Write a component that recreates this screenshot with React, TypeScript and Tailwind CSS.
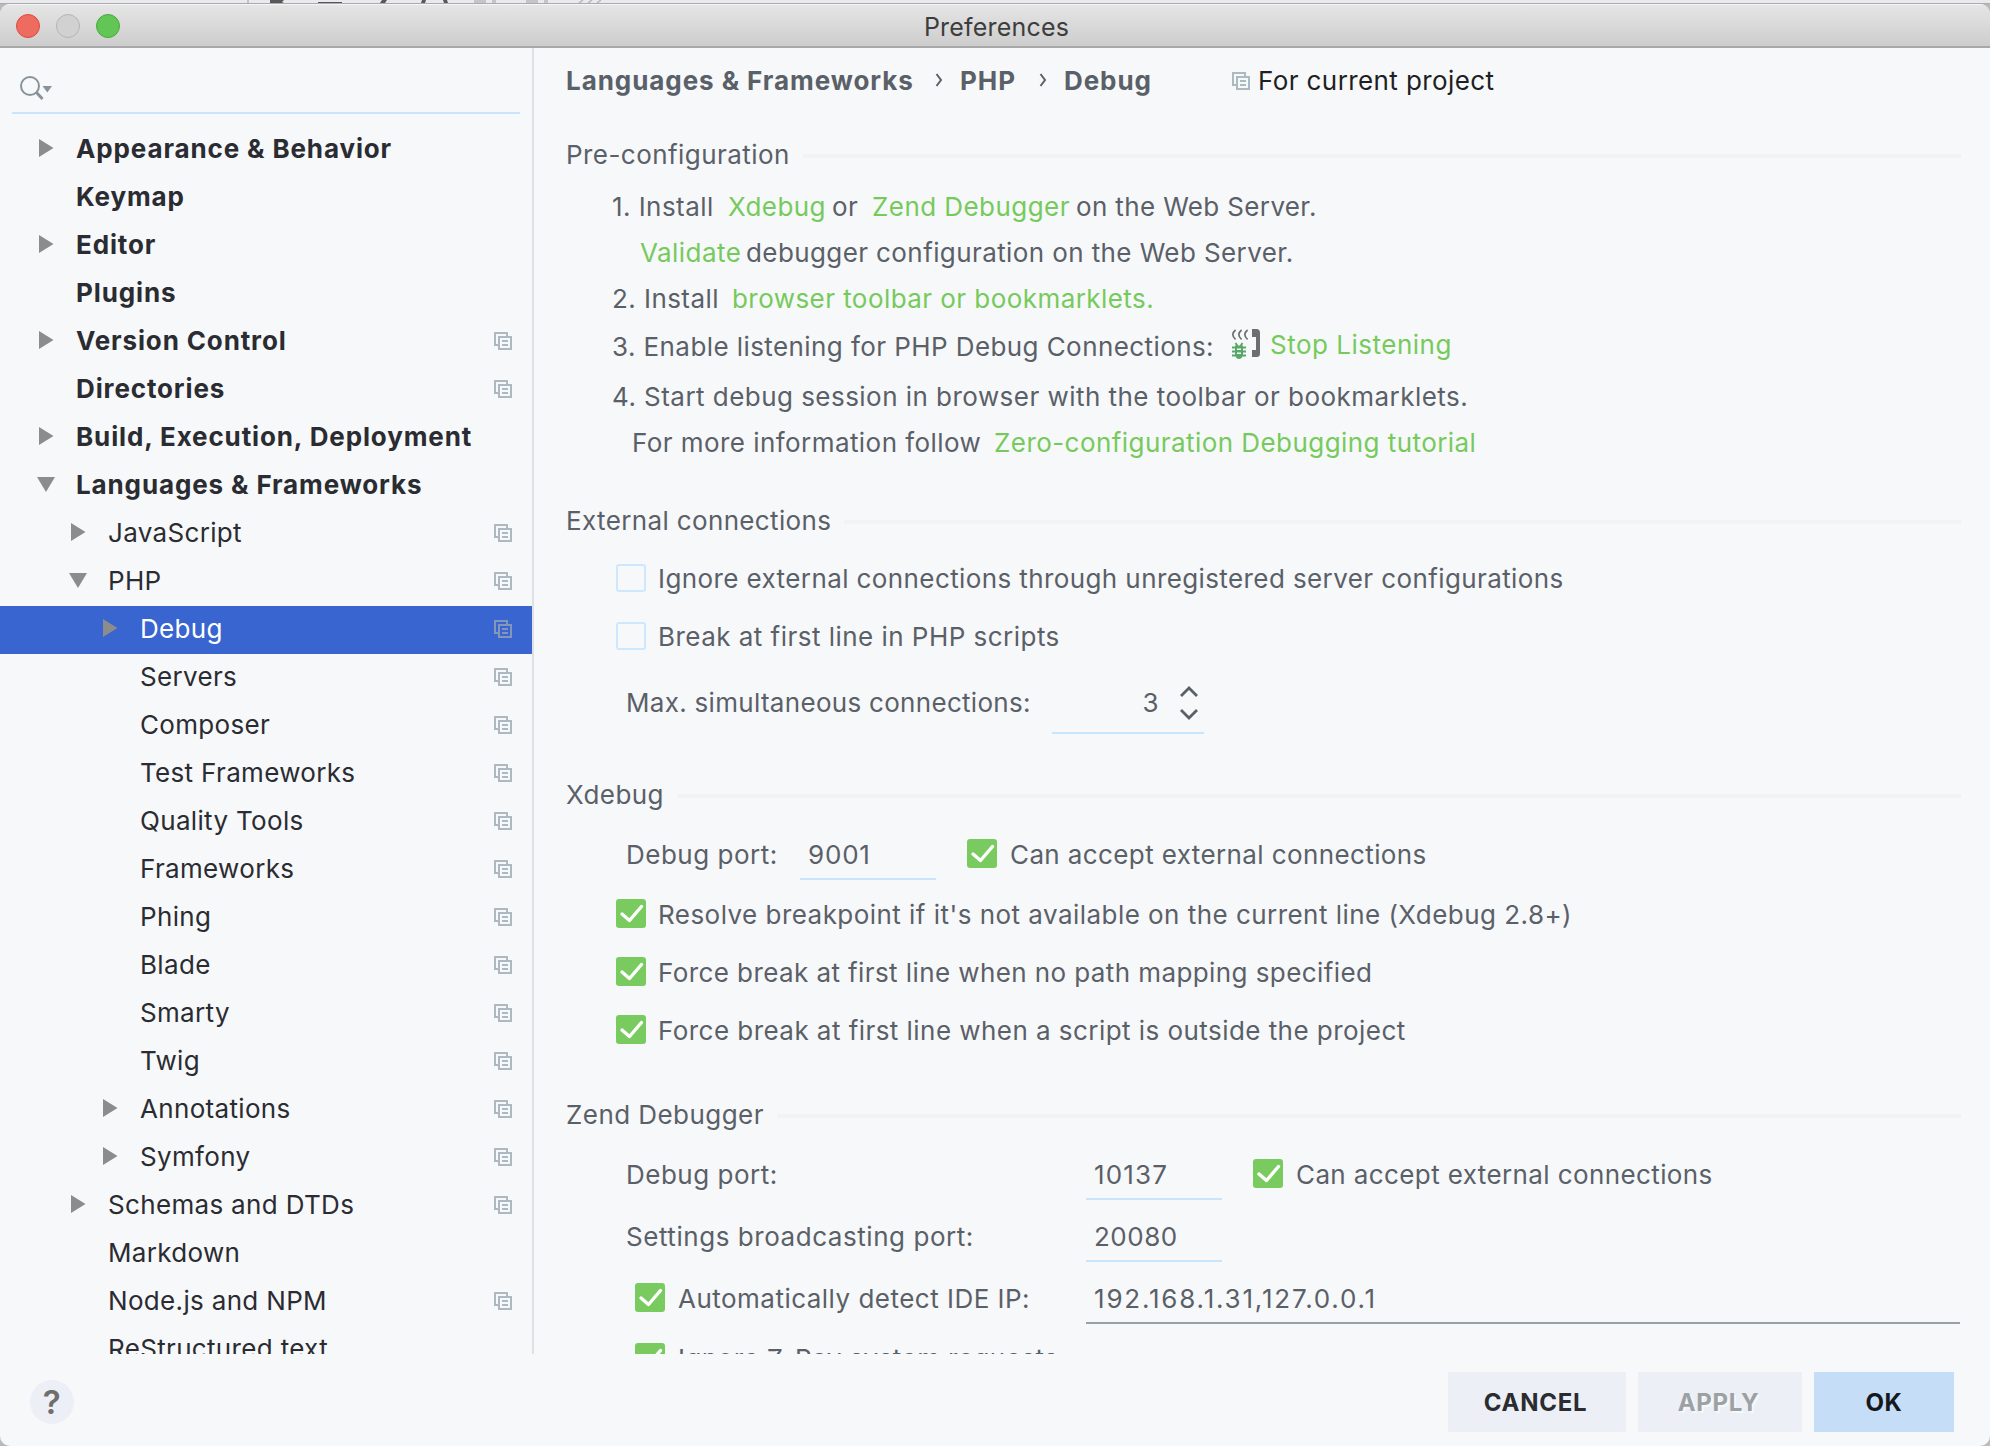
import type { ReactNode } from "react";

type Item = {
  label: string;
  level: 0 | 1 | 2;
  arrow?: "right" | "down";
  project?: boolean;
  selected?: boolean;
};

const ITEMS: Item[] = [
  { label: "Appearance & Behavior", level: 0, arrow: "right" },
  { label: "Keymap", level: 0 },
  { label: "Editor", level: 0, arrow: "right" },
  { label: "Plugins", level: 0 },
  { label: "Version Control", level: 0, arrow: "right", project: true },
  { label: "Directories", level: 0, project: true },
  { label: "Build, Execution, Deployment", level: 0, arrow: "right" },
  { label: "Languages & Frameworks", level: 0, arrow: "down" },
  { label: "JavaScript", level: 1, arrow: "right", project: true },
  { label: "PHP", level: 1, arrow: "down", project: true },
  { label: "Debug", level: 2, arrow: "right", project: true, selected: true },
  { label: "Servers", level: 2, project: true },
  { label: "Composer", level: 2, project: true },
  { label: "Test Frameworks", level: 2, project: true },
  { label: "Quality Tools", level: 2, project: true },
  { label: "Frameworks", level: 2, project: true },
  { label: "Phing", level: 2, project: true },
  { label: "Blade", level: 2, project: true },
  { label: "Smarty", level: 2, project: true },
  { label: "Twig", level: 2, project: true },
  { label: "Annotations", level: 2, arrow: "right", project: true },
  { label: "Symfony", level: 2, arrow: "right", project: true },
  { label: "Schemas and DTDs", level: 1, arrow: "right", project: true },
  { label: "Markdown", level: 1 },
  { label: "Node.js and NPM", level: 1, project: true },
  { label: "ReStructured text", level: 1 },
];

const INDENT = ["pl-[36px]", "pl-[68px]", "pl-[100px]"];

function ProjectIcon({ className = "" }: { className?: string }) {
  return (
    <svg width="18" height="18" viewBox="0 0 18 18" fill="none" stroke="currentColor" strokeWidth="2" className={`shrink-0 ${className}`}>
      <path d="M4 13H1V1H13V4" />
      <rect x="5" y="5" width="12" height="12" />
      <path d="M8 9H14M8 13H14" />
    </svg>
  );
}

function TreeArrow({ dir }: { dir?: "right" | "down" }) {
  return (
    <svg width="20" height="20" viewBox="0 0 20 20" className="mb-1 shrink-0" fill="#8c8c8c">
      {dir === "right" && <path d="M3 1L17.5 10L3 19Z" />}
      {dir === "down" && <path d="M1 3H19L10 18Z" />}
    </svg>
  );
}

function TreeRow({ item }: { item: Item }) {
  const text = item.selected ? "text-white" : "text-[#2a2c32]";
  const weight = item.level === 0 ? "font-bold tracking-[0.87px]" : "tracking-[0.33px]";
  return (
    <div className={`flex h-12 shrink-0 items-center pr-[20px] ${INDENT[item.level]} ${item.selected ? "bg-[#3965d0]" : ""}`}>
      <TreeArrow dir={item.arrow} />
      <span className={`ml-[20px] flex-1 pb-0.5 ${weight} ${text}`}>{item.label}</span>
      {item.project && <ProjectIcon className={`mb-0.5 ${item.selected ? "text-[#8497ba]" : "text-[#adb9c1]"}`} />}
    </div>
  );
}

function Checkbox({ checked }: { checked?: boolean }) {
  if (!checked) {
    return <span className="mb-0.5 h-7 w-[30px] shrink-0 rounded-[3px] border-2 border-[#cfe7fd]" />;
  }
  return (
    <span className="mb-[3px] flex h-[29px] w-[30px] shrink-0 rounded-[3px] bg-[#79cb60]">
      <svg width="30" height="29" viewBox="0 0 30 29" fill="none" stroke="#fff" strokeWidth="3.4" strokeLinecap="round" strokeLinejoin="round">
        <path d="M6 15L13.5 21.5L25.5 7.5" />
      </svg>
    </span>
  );
}

function Heading({ children, className }: { children: ReactNode; className: string }) {
  return (
    <div className={`flex shrink-0 items-center pl-[32px] pr-[29px] ${className}`}>
      <span className="shrink-0">{children}</span>
      <span className="ml-[13px] mt-0.5 h-1 flex-1 bg-[#f2f3f4]" />
    </div>
  );
}

function Row({ children, className }: { children: ReactNode; className: string }) {
  return <div className={`flex shrink-0 items-center ${className}`}>{children}</div>;
}

function Crumb() {
  return (
    <svg width="8" height="16" viewBox="0 0 8 16" fill="none" stroke="#5a6068" strokeWidth="2" className="mb-0.5 shrink-0">
      <path d="M1.5 2L6 8L1.5 14" />
    </svg>
  );
}

function ListenIcon() {
  return (
    <svg width="29" height="31" viewBox="0 0 29 31" fill="none" className="mb-1.5 shrink-0">
      <g stroke="#6e6e6e" strokeWidth="1.7">
        <path d="M4.6 1Q-1 5.5 4.6 10.4M10.6 1Q5 5.5 10.6 10.4M16.6 1Q11 5.5 16.6 10.4" />
      </g>
      <path fill="#6e6e6e" d="M21 0H25.5Q29 0 29 4V24.5Q29 28 25.5 28H21V21H25V8H21Z" />
      <g stroke="#59a869" strokeWidth="2">
        <path d="M4.5 14L6.5 17M11.5 14L9.500 17M1 18.500H15M1 22.500H15M1 26.500H15" />
      </g>
      <path fill="#59a869" d="M4 16.500H12V25.500Q11 30 8 30Q5 30 4 25.500Z" />
      <path fill="#f7f8fa" d="M6 19.500H10V21H6ZM6 23.500H10V25H6Z" />
    </svg>
  );
}

function Field({ children, className }: { children: ReactNode; className: string }) {
  return <span className={`flex items-center border-b-2 border-[#c9e4fc] pt-0.5 pl-2 ${className}`}>{children}</span>;
}

const LINK = "text-[#76ca5c]";

export default function App() {
  return (
    <div className="flex h-[1446px] w-[1990px] flex-col overflow-hidden bg-[#b9babc] font-['Inter',sans-serif] text-[26px] leading-8 whitespace-nowrap">
      <div className="relative h-1 shrink-0 border-b border-[#a9abad] bg-[#e9eaed]">
        <svg width="640" height="3" viewBox="0 0 640 3" className="absolute top-0 left-0">
          <path fill="#c4c5c8" d="M247 0H249V3H247ZM474 0H486V3H474ZM492 0H496V3H492ZM526 0H538V3H526ZM544 0H548V3H544Z" />
          <path fill="#58585a" d="M270 0H284L282 2L284 3H270ZM318 2H342V3H318ZM382 0H387L385 3H380ZM422 0H426L425 3H421ZM443 0H447L448 3H444Z" />
          <path stroke="#b5b6b9" strokeWidth="1.500" d="M579 3L583 0M588 3L592 0M597 3L601 0" />
        </svg>
      </div>

      <div className="flex min-h-0 flex-1 flex-col overflow-hidden rounded-[10px] bg-[#f7f8fa]">
        <header className="flex h-11 shrink-0 items-center border-t border-b-2 border-t-[#f5f5f5] border-b-[#a8a8a8] bg-linear-to-b from-[#e5e5e5] to-[#cdcdcd] pl-4">
          <div className="flex w-[200px] gap-4">
            <span className="size-6 rounded-full border border-[#e0483e] bg-[#ed6b5f]" />
            <span className="size-6 rounded-full border border-[#b4b4b4] bg-[#d1d1d1]" />
            <span className="size-6 rounded-full border border-[#4aa73c] bg-[#61c655]" />
          </div>
          <span className="mr-[213px] flex-1 pt-0.5 text-center text-[25px] tracking-[0.2px] text-[#3d3d3d]">Preferences</span>
        </header>

        <div className="flex h-[1306px] shrink-0 overflow-hidden">
          <aside className="flex w-[534px] shrink-0 flex-col overflow-hidden border-r-2 border-[#dfe1e4]">
            <div className="mx-3 mb-3 flex h-[66px] shrink-0 items-start border-b-2 border-[#c9e4fc] pt-7 pl-2">
              <svg width="34" height="26" viewBox="0 0 34 26" fill="none">
                <circle cx="10" cy="10" r="9" stroke="#87939a" strokeWidth="2" />
                <path d="M16 16L22.500 23" stroke="#87939a" strokeWidth="3" />
                <path d="M22.500 10H32L27.300 16.500Z" fill="#87939a" />
              </svg>
            </div>
            {ITEMS.map((item) => (
              <TreeRow key={item.label} item={item} />
            ))}
          </aside>

          <main className="flex min-w-0 flex-1 flex-col overflow-hidden tracking-[0.44px] text-[#5a6068]">
            <Row className="h-[66px] pl-[32px] font-bold tracking-[0.93px]">
              <span className="w-[369px]">Languages &amp; Frameworks</span>
              <Crumb />
              <span className="ml-[17px] w-[79px]">PHP</span>
              <Crumb />
              <span className="ml-[17px] w-[168px]">Debug</span>
              <ProjectIcon className="text-[#adb9c1]" />
              <span className="ml-[8px] font-normal tracking-[0.4px] text-[#1d1f23]">For current project</span>
            </Row>

            <Heading className="h-[70px] pt-3">Pre-configuration</Heading>
            <Row className="h-[46px] pl-[78px]">
              <span className="w-[116px]">1. Install</span>
              <span className={`w-[104px] ${LINK}`}>Xdebug</span>
              <span className="w-[40px]">or</span>
              <span className={`w-[204px] ${LINK}`}>Zend Debugger</span>
              <span className="tracking-[0.36px]">on the Web Server.</span>
            </Row>
            <Row className="h-[46px] pl-[106px]">
              <span className={`w-[106px] ${LINK}`}>Validate</span>
              <span className="tracking-[0.4px]">debugger configuration on the Web Server.</span>
            </Row>
            <Row className="h-[46px] pl-[78px]">
              <span className="w-[120px]">2. Install</span>
              <span className={LINK}>browser toolbar or bookmarklets.</span>
            </Row>
            <Row className="h-[50px] pl-[78px]">
              <span className="w-[619px] tracking-[0.42px]">3. Enable listening for PHP Debug Connections:</span>
              <ListenIcon />
              <span className={`mb-[5px] ml-[10px] tracking-[0.5px] ${LINK}`}>Stop Listening</span>
            </Row>
            <Row className="h-[50px] pl-[78px] tracking-[0.46px]">4. Start debug session in browser with the toolbar or bookmarklets.</Row>
            <Row className="h-[42px] pl-[98px]">
              <span className="w-[362px]">For more information follow</span>
              <span className={LINK}>Zero-configuration Debugging tutorial</span>
            </Row>

            <Heading className="h-[86px] pt-7 tracking-[0.36px]">External connections</Heading>
            <Row className="h-[58px] gap-3 pl-[82px]">
              <Checkbox />
              <span className="tracking-[0.4px]">Ignore external connections through unregistered server configurations</span>
            </Row>
            <Row className="h-[58px] gap-3 pl-[82px]">
              <Checkbox />
              <span className="tracking-[0.47px]">Break at first line in PHP scripts</span>
            </Row>
            <Row className="h-[74px] pl-[92px]">
              <span className="w-[426px] tracking-[0.3px]">Max. simultaneous connections:</span>
              <span className="flex h-[62px] w-[152px] items-center justify-end border-b-2 border-[#c9e4fc] pt-0.5 pr-1.5">
                <span className="mr-[21px]">3</span>
                <svg width="18" height="34" viewBox="0 0 18 34" fill="none" stroke="#5a6068" strokeWidth="2.800">
                  <path d="M1 10L9 2L17 10M1 24L9 32L17 24" />
                </svg>
              </span>
            </Row>

            <Heading className="h-[86px] pt-6">Xdebug</Heading>
            <Row className="h-[58px] pl-[92px]">
              <span className="w-[174px] tracking-[0.5px]">Debug port:</span>
              <Field className="h-[50px] w-[136px] tracking-[0.8px]">9001</Field>
              <span className="ml-[31px] flex items-center gap-[13px]">
                <Checkbox checked />
                <span className="tracking-[0.39px]">Can accept external connections</span>
              </span>
            </Row>
            <Row className="h-[62px] gap-3 pl-[82px]">
              <Checkbox checked />
              <span className="tracking-[0.46px]">Resolve breakpoint if it's not available on the current line (Xdebug 2.8+)</span>
            </Row>
            <Row className="h-[54px] gap-3 pl-[82px]">
              <Checkbox checked />
              <span className="tracking-[0.41px]">Force break at first line when no path mapping specified</span>
            </Row>
            <Row className="h-[62px] gap-3 pl-[82px]">
              <Checkbox checked />
              <span className="tracking-[0.45px]">Force break at first line when a script is outside the project</span>
            </Row>

            <Heading className="h-[84px] pt-[22px]">Zend Debugger</Heading>
            <Row className="h-[58px] pl-[92px]">
              <span className="w-[460px] tracking-[0.5px]">Debug port:</span>
              <Field className="h-[50px] w-[136px] tracking-[1.170px]">10137</Field>
              <span className="ml-[31px] flex items-center gap-[13px]">
                <Checkbox checked />
                <span className="tracking-[0.39px]">Can accept external connections</span>
              </span>
            </Row>
            <Row className="h-[66px] pl-[92px]">
              <span className="w-[460px] tracking-[0.550px]">Settings broadcasting port:</span>
              <Field className="h-[50px] w-[136px] tracking-[0.500px]">20080</Field>
            </Row>
            <Row className="h-[58px] pl-[101px]">
              <Checkbox checked />
              <span className="ml-[13px] w-[408px] tracking-[0.48px]">Automatically detect IDE IP:</span>
              <span className="mr-[30px] flex h-[50px] flex-1 items-center border-b-2 border-[#98a1a3] pt-0.5 pl-2 tracking-[1.800px]">192.168.1.31,127.0.0.1</span>
            </Row>
            <Row className="h-[62px] gap-[13px] pl-[101px]">
              <Checkbox checked />
              <span>Ignore Z-Ray system requests</span>
            </Row>
          </main>
        </div>

        <footer className="flex min-h-0 flex-1 items-start pt-[18px] pr-9 pl-[30px] text-2xl leading-[30px] font-bold tracking-[0.700px]">
          <span className="mt-2 flex size-11 items-center justify-center rounded-full bg-[#eceff5] text-[33px] font-semibold text-[#6e6e6e]">?</span>
          <div className="ml-auto flex gap-3">
            <button className="h-[60px] w-[178px] bg-[#eceff5] pt-0.5 pr-[3px] text-[#2a2c32]">CANCEL</button>
            <button className="h-[60px] w-[164px] bg-[#eceff5] pt-0.5 pr-[3px] text-[#9ca1a4] [text-shadow:2px_2px_0_#f7f8fa]">APPLY</button>
            <button className="h-[60px] w-[140px] bg-[#c6ddf8] pt-0.5 text-[#16181c]">OK</button>
          </div>
        </footer>
      </div>
    </div>
  );
}
